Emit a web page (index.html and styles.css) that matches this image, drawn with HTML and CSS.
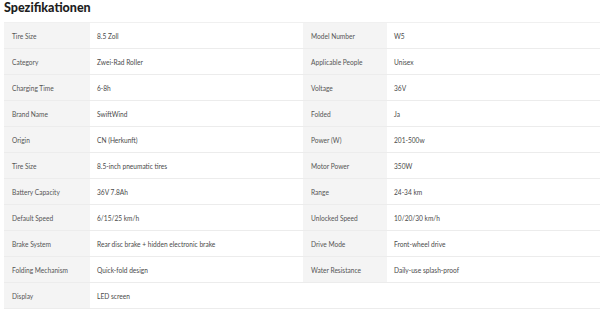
FILE: index.html
```html
<!DOCTYPE html>
<html lang="de">
<head>
<meta charset="utf-8">
<title>Spezifikationen</title>
<link rel="stylesheet" href="styles.css">
</head>
<body>
<section class="specs">
  <h2 class="specs-title">Spezifikationen</h2>
  <table class="specs-table">
    <colgroup>
      <col class="c-label1"><col class="c-value"><col class="c-label2"><col class="c-value">
    </colgroup>
    <tbody>
      <tr><th>Tire Size</th><td>8.5 Zoll</td><th>Model Number</th><td>W5</td></tr>
      <tr><th>Category</th><td>Zwei-Rad Roller</td><th>Applicable People</th><td>Unisex</td></tr>
      <tr><th>Charging Time</th><td>6-8h</td><th>Voltage</th><td>36V</td></tr>
      <tr><th>Brand Name</th><td>SwiftWind</td><th>Folded</th><td>Ja</td></tr>
      <tr><th>Origin</th><td>CN (Herkunft)</td><th>Power (W)</th><td>201-500w</td></tr>
      <tr><th>Tire Size</th><td>8.5-inch pneumatic tires</td><th>Motor Power</th><td>350W</td></tr>
      <tr><th>Battery Capacity</th><td>36V 7.8Ah</td><th>Range</th><td>24-34 km</td></tr>
      <tr><th>Default Speed</th><td>6/15/25 km/h</td><th>Unlocked Speed</th><td>10/20/30 km/h</td></tr>
      <tr><th>Brake System</th><td>Rear disc brake + hidden electronic brake</td><th>Drive Mode</th><td>Front-wheel drive</td></tr>
      <tr><th>Folding Mechanism</th><td>Quick-fold design</td><th>Water Resistance</th><td>Daily-use splash-proof</td></tr>
      <tr class="last"><th>Display</th><td>LED screen</td><td class="empty" colspan="2"></td></tr>
    </tbody>
  </table>
</section>
</body>
</html>
```
FILE: styles.css
```css
html, body {
  margin: 0;
  padding: 0;
  background: #ffffff;
}
body {
  font-family: "Lato", "Open Sans", "Noto Sans", sans-serif;
  color: #4a4a4a;
}
.specs {
  padding: 0 5px 0 4px;
}
.specs-title {
  margin: 0;
  height: 22px;
  font-family: "Lato", "Noto Sans", sans-serif;
  font-weight: 900;
  font-size: 12.5px;
  line-height: 16px;
  color: #1e1e1e;
  letter-spacing: 0;
}
.specs-table {
  width: 596px;
  border-collapse: collapse;
  table-layout: fixed;
  font-size: 6.6px;
}
.c-label1 { width: 86px; }
.c-label2 { width: 84px; }
.c-value { width: 213px; }
.specs-table tr {
  height: 26px;
}
.specs-table th,
.specs-table td {
  border-top: 1px solid #ececec;
  border-bottom: 1px solid #ececec;
  padding: 0 0 0 7px;
  text-align: left;
  font-weight: 400;
  white-space: nowrap;
  vertical-align: middle;
}
.specs-table th {
  background: #f4f4f4;
  color: #555555;
  padding-left: 8px;
}
.specs-table td {
  background: #ffffff;
  color: #4a4a4a;
}
.specs-table tr:first-child th,
.specs-table tr:first-child td {
  border-top-color: #f0f0f0;
}
```
